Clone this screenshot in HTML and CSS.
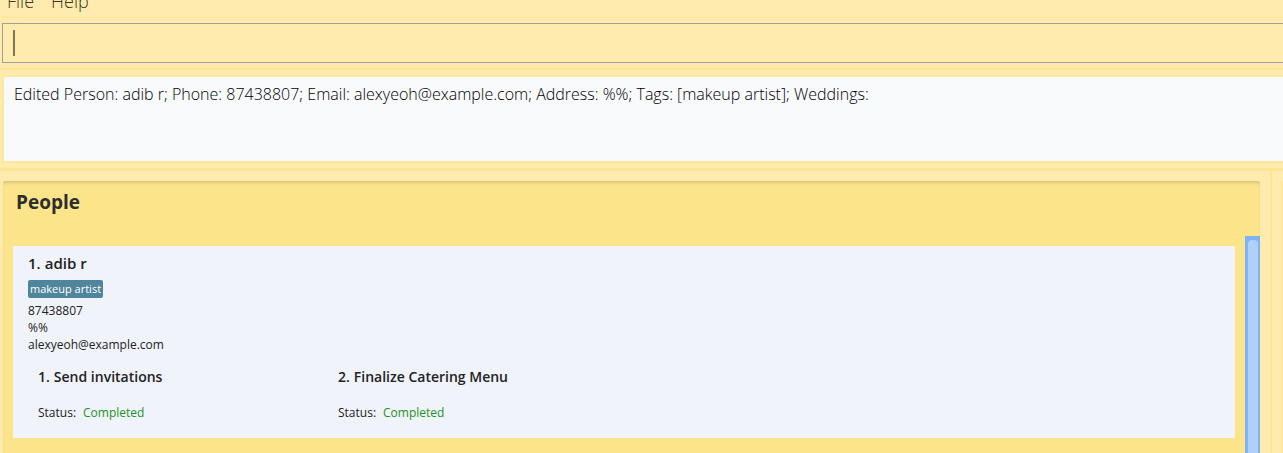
FILE: index.html
```html
<!DOCTYPE html>
<html lang="en">
<head>
<meta charset="utf-8">
<title>Wedding planner</title>
<link rel="stylesheet" href="styles.css">
</head>
<body>
<nav class="menu-bar">
  <button class="menu" type="button">File</button>
  <button class="menu" type="button">Help</button>
</nav>
<div class="command-box">
  <input class="command" type="text" aria-label="Command">
  <span class="caret"></span>
</div>
<div class="result-box">
  <output class="result">Edited Person: adib r; Phone: 87438807; Email: alexyeoh@example.com; Address: %%; Tags: [makeup artist]; Weddings:</output>
</div>
<main class="split">
  <section class="people">
    <h1 class="title">People</h1>
    <div class="list">
      <div class="cards">
        <article class="card">
          <h2 class="name"><span>1.</span><span>adib r</span></h2>
          <span class="tag">makeup artist</span>
          <p class="detail">87438807</p>
          <p class="detail">%%</p>
          <p class="detail">alexyeoh@example.com</p>
          <div class="tasks">
            <div class="task">
              <h3 class="task-name"><span>1.</span><span>Send invitations</span></h3>
              <p class="status"><span>Status:</span><span class="done">Completed</span></p>
            </div>
            <div class="task">
              <h3 class="task-name"><span>2.</span><span>Finalize Catering Menu</span></h3>
              <p class="status"><span>Status:</span><span class="done">Completed</span></p>
            </div>
          </div>
        </article>
      </div>
      <div class="scrollbar"><div class="thumb"></div></div>
    </div>
  </section>
  <div class="divider"></div>
  <div class="side"></div>
</main>
</body>
</html>
```
FILE: styles.css
```css
* {
  box-sizing: border-box;
  margin: 0;
}

body {
  display: flex;
  flex-direction: column;
  height: 100vh;
  overflow: hidden;
  background: #ffebad;
  color: #222;
  font-family: "Open Sans", "Noto Sans", sans-serif;
}

.menu-bar {
  display: flex;
  flex: none;
  align-items: flex-end;
  gap: 17px;
  height: 18px;
  padding: 0 7px 4px;
  overflow: hidden;
  border-bottom: 1px solid #fde79d;
}

.menu {
  padding: 0;
  border: 0;
  background: none;
  color: #3a3626;
  font: 300 18px/24px "Open Sans", "Noto Sans", sans-serif;
}

.command-box {
  position: relative;
  flex: none;
  padding: 5px 0 5px 2px;
  border-bottom: 2px solid #fde598;
}

.command {
  display: block;
  width: 100%;
  height: 40px;
  padding: 0 10px;
  border: 1px solid #a0a0a4;
  border-right: 0;
  border-radius: 0;
  outline: 0;
  background: transparent;
  font: 300 17px/24px "Open Sans", "Noto Sans", sans-serif;
}

.caret {
  position: absolute;
  top: 12px;
  left: 13px;
  width: 2px;
  height: 26px;
  background: #80765a;
}

.result-box {
  flex: none;
  padding: 5px 0 5px 2px;
  border-bottom: 3px solid #fde598;
}

.result {
  display: block;
  height: 88px;
  padding: 5px 10px;
  border: 2px solid #fde8a0;
  border-right: 0;
  background: #f9fafc;
  color: #000;
  font-size: 16px;
  font-weight: 300;
  line-height: 24px;
}

.split {
  display: flex;
  flex: 1;
  min-height: 0;
  padding-left: 3px;
}

.people {
  display: flex;
  flex: 1;
  flex-direction: column;
  min-width: 0;
  margin-top: 10px;
  background: #fce48a;
  box-shadow: inset 0 3px 3px -1px #dcc478;
  border-radius: 2px 2px 0 0;
}

.title {
  padding: 7px 13px 20px;
  color: #2d2d2d;
  font-size: 19px;
  line-height: 28px;
}

.list {
  display: flex;
  flex: 1;
  min-height: 0;
}

.cards {
  flex: 1;
  padding: 10px;
}

.card {
  padding: 5px 15px 17px;
  background: #f0f3f9;
}

.name,
.task-name {
  display: flex;
  gap: 4px;
  font-weight: 600;
}

.name {
  font-size: 15px;
  line-height: 24px;
}

.tag {
  display: block;
  width: fit-content;
  margin: 5px 0 4px;
  padding: 0 2px;
  border-radius: 2px;
  background: #50869c;
  color: #fff;
  font-size: 11px;
  line-height: 18px;
}

.detail,
.status {
  font-size: 12px;
  line-height: 17px;
}

.tasks {
  display: flex;
  padding: 14px 10px 0;
}

.task {
  width: 300px;
}

.task-name {
  font-size: 14px;
  line-height: 20px;
}

.status {
  display: flex;
  gap: 7px;
  padding-top: 17px;
}

.done {
  color: #1d9224;
}

.scrollbar {
  width: 15px;
  padding: 4px 2px 0 3px;
  background: #7eb2fb;
}

.thumb {
  height: 100%;
  border-radius: 4px 4px 0 0;
  background: #aed0fb;
}

.divider {
  width: 2px;
  margin-left: 10px;
  background: #fde598;
}

.side {
  width: 1px;
  margin: 10px 0 0 10px;
  background: #fde598;
}
```
